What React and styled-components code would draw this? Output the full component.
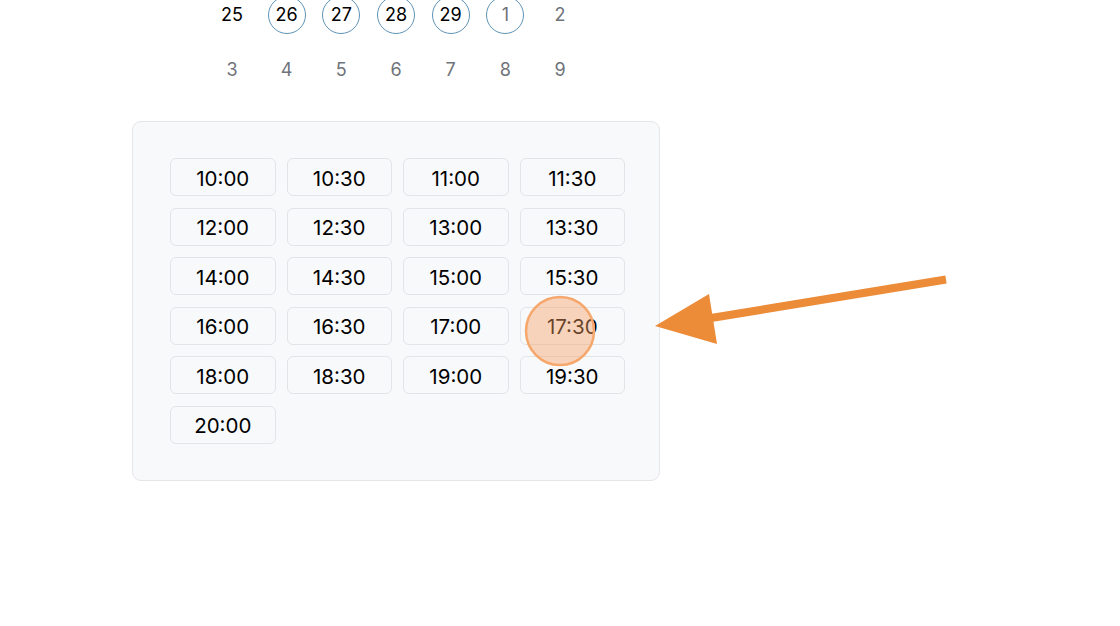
import styled, { createGlobalStyle } from 'styled-components'

const GlobalStyle = createGlobalStyle`
  html, body {
    margin: 0;
    padding: 0;
    background: #fff;
    font-family: Inter, 'Noto Sans', sans-serif;
    overflow: hidden;
  }
`

const days = [
  { n: 25, tone: 'dark' },
  { n: 26, tone: 'dark', ring: true },
  { n: 27, tone: 'dark', ring: true },
  { n: 28, tone: 'dark', ring: true },
  { n: 29, tone: 'dark', ring: true },
  { n: 1, tone: 'muted', ring: true },
  { n: 2, tone: 'muted' },
  { n: 3, tone: 'muted' },
  { n: 4, tone: 'muted' },
  { n: 5, tone: 'muted' },
  { n: 6, tone: 'muted' },
  { n: 7, tone: 'muted' },
  { n: 8, tone: 'muted' },
  { n: 9, tone: 'muted' },
]

const slots = [
  '10:00', '10:30', '11:00', '11:30',
  '12:00', '12:30', '13:00', '13:30',
  '14:00', '14:30', '15:00', '15:30',
  '16:00', '16:30', '17:00', '17:30',
  '18:00', '18:30', '19:00', '19:30',
  '20:00',
]

function App() {
  return (
    <Page>
      <GlobalStyle />
      <Column>
        <Calendar>
          {days.map((d, i) => (
            <DayCell key={i}>
              <Day $tone={d.tone} $ring={d.ring}>{d.n}</Day>
            </DayCell>
          ))}
        </Calendar>
        <SlotPanel>
          <SlotGrid>
            {slots.map((s) => (
              <Slot key={s}>{s}</Slot>
            ))}
          </SlotGrid>
        </SlotPanel>
      </Column>
      <Annotation width="1120" height="626" viewBox="0 0 1120 626">
        <circle cx="560" cy="331" r="34" fill="rgba(247,160,98,0.42)" stroke="#f6a76b" strokeWidth="2.5" />
        <line x1="946" y1="279.5" x2="705" y2="319" stroke="#ec8c38" strokeWidth="8" />
        <polygon points="655,326 709,294 717,344" fill="#ec8c38" />
      </Annotation>
    </Page>
  )
}

const Page = styled.div`
  position: relative;
  display: flow-root;
  width: 1120px;
  height: 626px;
  padding-left: 132px;
  box-sizing: border-box;
  overflow: hidden;
`

const Column = styled.div`
  width: 528px;
  display: flex;
  flex-direction: column;
  align-items: center;
  margin-top: -13px;
`

const Calendar = styled.div`
  display: grid;
  grid-template-columns: repeat(7, 54.7px);
  grid-auto-rows: 55px;
`

const DayCell = styled.div`
  display: flex;
  align-items: center;
  justify-content: center;
`

const Day = styled.div`
  width: 38px;
  height: 38px;
  box-sizing: border-box;
  border-radius: 50%;
  border: 1.5px solid ${(p) => (p.$ring ? '#5f93b6' : 'transparent')};
  display: flex;
  align-items: center;
  justify-content: center;
  font-size: 18px;
  color: ${(p) => (p.$tone === 'dark' ? '#000' : '#6f737a')};
`

const SlotPanel = styled.div`
  margin-top: 24px;
  width: 528px;
  height: 360px;
  box-sizing: border-box;
  background: #f8f9fb;
  border: 1.5px solid #e4e6ea;
  border-radius: 9px;
  padding: 36px 34px 0 37px;
`

const SlotGrid = styled.div`
  display: grid;
  grid-template-columns: repeat(4, 105.5px);
  grid-auto-rows: 38px;
  column-gap: 11px;
  row-gap: 11.5px;
`

const Slot = styled.div`
  box-sizing: border-box;
  background: #f8f9fb;
  border: 1.5px solid #e2e4e8;
  border-radius: 6px;
  display: flex;
  align-items: center;
  justify-content: center;
  padding-top: 2px;
  font-size: 20.5px;
  color: #000;
`

const Annotation = styled.svg`
  position: absolute;
  top: 0;
  left: 0;
  pointer-events: none;
`

export default App
